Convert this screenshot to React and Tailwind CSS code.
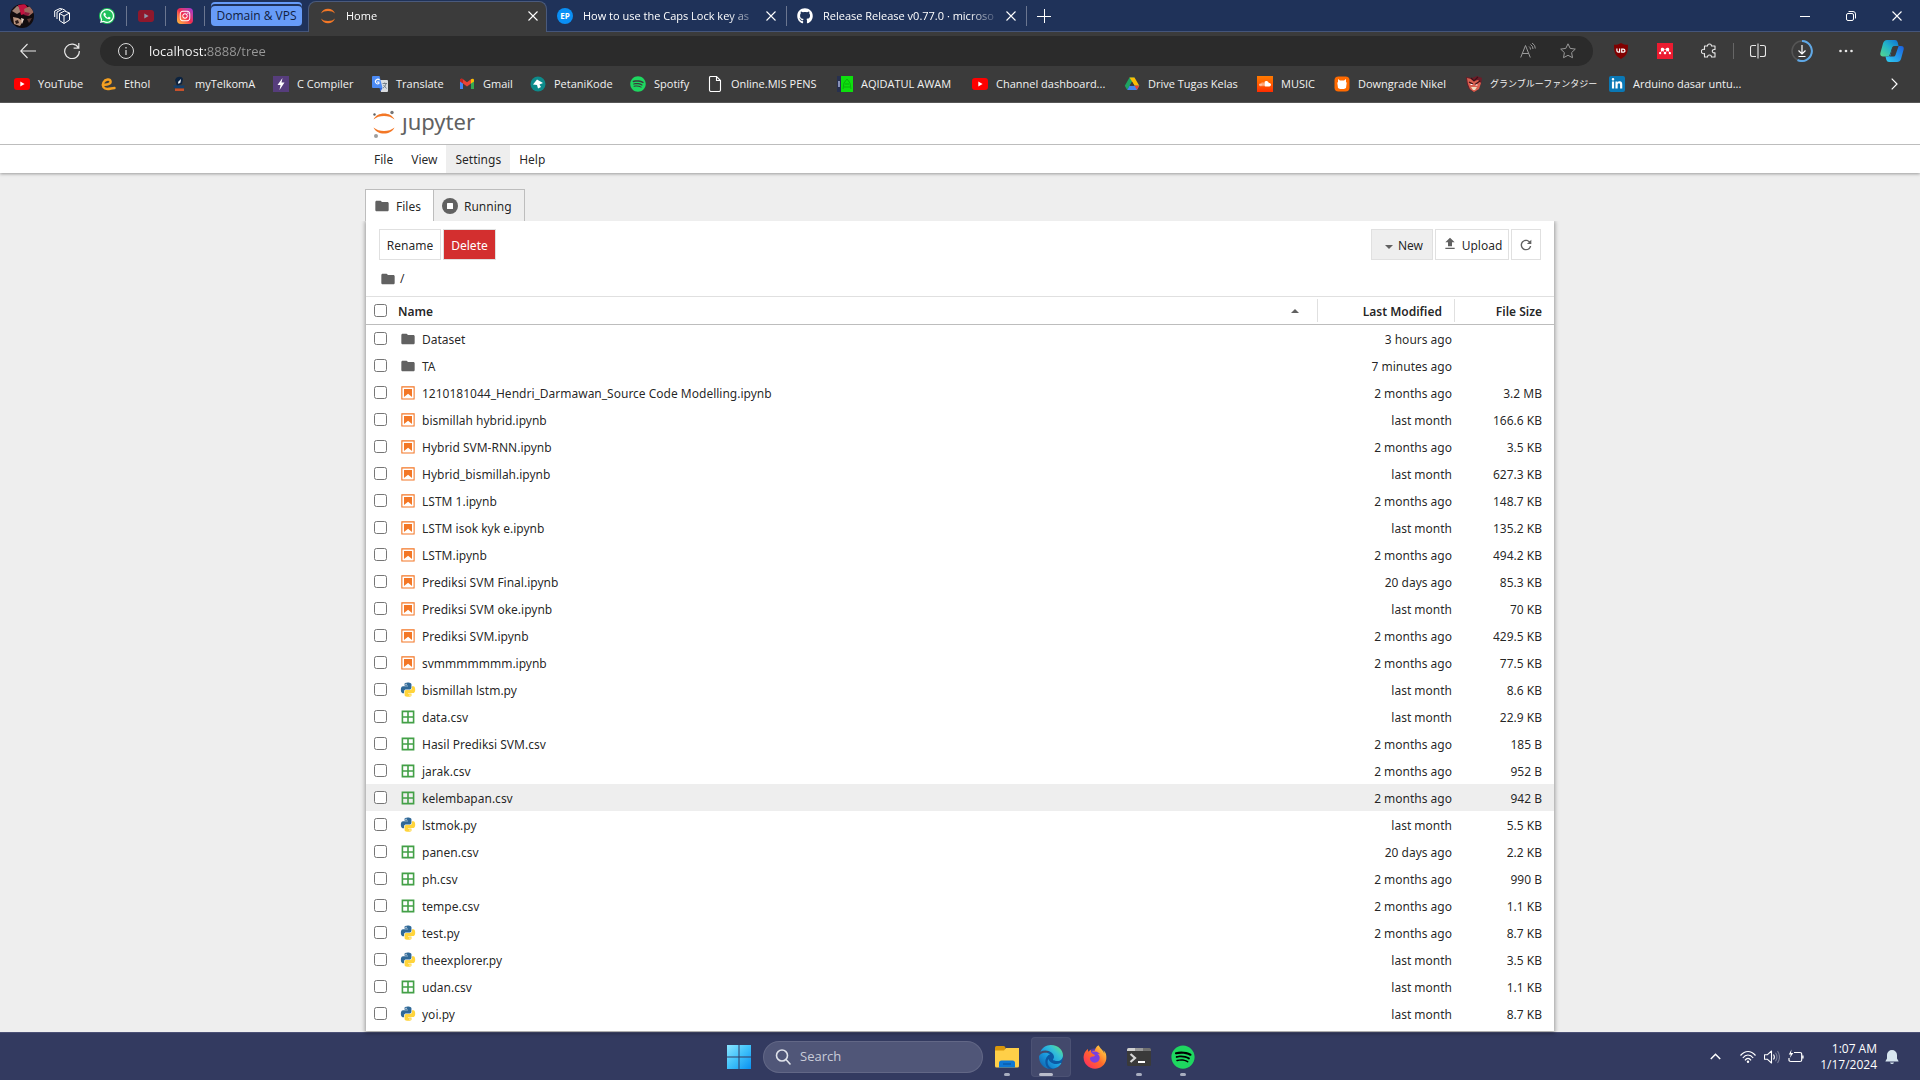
import React from 'react';
import { FaEdge, FaFirefoxBrowser, FaGithub, FaInstagram, FaLinkedinIn, FaSoundcloud, FaSpotify, FaWhatsapp } from 'react-icons/fa6';
import { SiMendeley } from 'react-icons/si';
import { clsx } from 'clsx';

const files = [
    { type: 'folder', name: 'Dataset', modified: '3 hours ago', size: '' },
    { type: 'folder', name: 'TA', modified: '7 minutes ago', size: '' },
    { type: 'notebook', name: '1210181044_Hendri_Darmawan_Source Code Modelling.ipynb', modified: '2 months ago', size: '3.2 MB' },
    { type: 'notebook', name: 'bismillah hybrid.ipynb', modified: 'last month', size: '166.6 KB' },
    { type: 'notebook', name: 'Hybrid SVM-RNN.ipynb', modified: '2 months ago', size: '3.5 KB' },
    { type: 'notebook', name: 'Hybrid_bismillah.ipynb', modified: 'last month', size: '627.3 KB' },
    { type: 'notebook', name: 'LSTM 1.ipynb', modified: '2 months ago', size: '148.7 KB' },
    { type: 'notebook', name: 'LSTM isok kyk e.ipynb', modified: 'last month', size: '135.2 KB' },
    { type: 'notebook', name: 'LSTM.ipynb', modified: '2 months ago', size: '494.2 KB' },
    { type: 'notebook', name: 'Prediksi SVM Final.ipynb', modified: '20 days ago', size: '85.3 KB' },
    { type: 'notebook', name: 'Prediksi SVM oke.ipynb', modified: 'last month', size: '70 KB' },
    { type: 'notebook', name: 'Prediksi SVM.ipynb', modified: '2 months ago', size: '429.5 KB' },
    { type: 'notebook', name: 'svmmmmmmm.ipynb', modified: '2 months ago', size: '77.5 KB' },
    { type: 'python', name: 'bismillah lstm.py', modified: 'last month', size: '8.6 KB' },
    { type: 'csv', name: 'data.csv', modified: 'last month', size: '22.9 KB' },
    { type: 'csv', name: 'Hasil Prediksi SVM.csv', modified: '2 months ago', size: '185 B' },
    { type: 'csv', name: 'jarak.csv', modified: '2 months ago', size: '952 B' },
    { type: 'csv', name: 'kelembapan.csv', modified: '2 months ago', size: '942 B', active: true },
    { type: 'python', name: 'lstmok.py', modified: 'last month', size: '5.5 KB' },
    { type: 'csv', name: 'panen.csv', modified: '20 days ago', size: '2.2 KB' },
    { type: 'csv', name: 'ph.csv', modified: '2 months ago', size: '990 B' },
    { type: 'csv', name: 'tempe.csv', modified: '2 months ago', size: '1.1 KB' },
    { type: 'python', name: 'test.py', modified: '2 months ago', size: '8.7 KB' },
    { type: 'python', name: 'theexplorer.py', modified: 'last month', size: '3.5 KB' },
    { type: 'csv', name: 'udan.csv', modified: 'last month', size: '1.1 KB' },
    { type: 'python', name: 'yoi.py', modified: 'last month', size: '8.7 KB' },
];

const FolderIcon = () => (
    <svg className="size-4 shrink-0" viewBox="0 0 24 24" fill="#616161">
        <path d="M10 4H4c-1.1 0-1.99.9-1.99 2L2 18c0 1.1.9 2 2 2h16c1.1 0 2-.9 2-2V8c0-1.1-.9-2-2-2h-8l-2-2z" />
    </svg>
);

const NotebookIcon = () => (
    <svg className="size-4 shrink-0" viewBox="0 0 22 22" fill="#f37726">
        <path d="M18.7 3.3v15.4H3.3V3.3h15.4m1.5-1.5H1.8v18.3h18.3l.1-18.3z" />
        <path d="M16.5 16.5l-5.4-4.3-5.6 4.3v-11h11z" />
    </svg>
);

const CsvIcon = () => (
    <svg className="size-4 shrink-0" viewBox="0 0 22 22" fill="#43a047">
        <path d="M2.2 2.2v17.6h17.6V2.2H2.2zm15.4 7.7h-5.5V4.4h5.5v5.5zM9.9 4.4v5.5H4.4V4.4h5.5zm-5.5 7.7h5.5v5.5H4.4v-5.5zm7.7 5.5v-5.5h5.5v5.5h-5.5z" />
    </svg>
);

const PythonIcon = () => (
    <svg className="size-4 shrink-0" viewBox="-1.5 -1 27 27">
        <path
            fill="#306998"
            d="M14.25.18l.9.2.73.26.59.3.45.32.34.34.25.34.16.33.1.3.04.26.02.2-.01.13V8.5l-.05.63-.13.55-.21.46-.26.38-.3.31-.33.25-.35.19-.35.14-.33.1-.3.07-.26.04-.21.02H8.77l-.69.05-.59.14-.5.22-.41.27-.33.32-.27.35-.2.36-.15.37-.1.35-.07.32-.04.27-.02.21v3.06H3.17l-.21-.03-.28-.07-.32-.12-.35-.18-.36-.26-.36-.36-.35-.46-.32-.59-.28-.73-.21-.88-.14-1.05-.05-1.23.06-1.22.16-1.04.24-.87.32-.71.36-.57.4-.44.42-.33.42-.24.4-.16.36-.1.32-.05.24-.01h.16l.06.01h8.16v-.83H6.18l-.01-2.75-.02-.37.05-.34.11-.31.17-.28.25-.26.31-.23.38-.2.44-.18.51-.15.58-.12.64-.1.71-.06.77-.04.84-.02 1.27.05zm-6.3 1.98l-.23.33-.08.41.08.41.23.34.33.22.41.09.41-.09.33-.22.23-.34.08-.41-.08-.41-.23-.33-.33-.22-.41-.09-.41.09z"
        />
        <path
            fill="#ffd43b"
            d="M21.1 6.11l.28.06.32.12.35.18.36.27.36.35.35.47.32.59.28.73.21.88.14 1.04.05 1.23-.06 1.23-.16 1.04-.24.86-.32.71-.36.57-.4.45-.42.33-.42.24-.4.16-.36.09-.32.05-.24.02-.16-.01h-8.22v.82h5.84l.01 2.76.02.36-.05.34-.11.31-.17.29-.25.25-.31.24-.38.2-.44.17-.51.15-.58.13-.64.09-.71.07-.77.04-.84.01-1.27-.04-1.07-.14-.9-.2-.73-.25-.59-.3-.45-.33-.34-.34-.25-.34-.16-.33-.1-.3-.04-.25-.02-.2.01-.13v-5.34l.05-.64.13-.54.21-.46.26-.38.3-.32.33-.24.35-.2.35-.14.33-.1.3-.06.26-.04.21-.02.13-.01h5.84l.69-.05.59-.14.5-.21.41-.28.33-.32.27-.35.2-.36.15-.36.1-.35.07-.32.04-.28.02-.21V6.07h2.09l.14.01zm-6.47 14.25l-.23.33-.08.41.08.41.23.33.33.23.41.08.41-.08.33-.23.23-.33.08-.41-.08-.41-.23-.33-.33-.23-.41-.08-.41.08z"
        />
    </svg>
);

const fileIcons = { folder: FolderIcon, notebook: NotebookIcon, csv: CsvIcon, python: PythonIcon };

const YoutubeIcon = () => (
    <svg className="size-4 shrink-0" viewBox="0 0 16 16">
        <rect x="0" y="2" width="16" height="12" rx="3" fill="#f00" />
        <path d="M6.3 5.5v5l4.3-2.5z" fill="#fff" />
    </svg>
);

const SpotifyIcon = () => <FaSpotify className="size-4 shrink-0 text-[#1ed760]" />;

const EtholIcon = () => (
    <svg className="size-4 shrink-0" viewBox="0 0 16 16" fill="none" stroke="#f5a021" strokeWidth="2.4" strokeLinecap="round">
        <path d="M3 8.6c4 .6 8-.6 7.600-3.200C10.200 2.600 5.400 2.800 3.400 6.500 1.600 10 3.800 13 7.500 13c2.500 0 4.500-1 7-1" />
    </svg>
);

const TelkomIcon = () => (
    <svg className="size-4 shrink-0" viewBox="0 0 16 16">
        <path d="M4 4c1-4 7-4.500 8-1l-1 5-5 2z" fill="#0c2340" />
        <path d="M7 6l3-3-.5 3.500L7.500 8z" fill="#e8eef5" />
        <path d="M2 9.500h12l-1.500 2.500h-9z" fill="#14406e" />
        <path d="M4 12.500h9V15H4z" fill="#c8512b" />
    </svg>
);

const CompilerIcon = () => (
    <svg className="size-4 shrink-0" viewBox="0 0 16 16">
        <path d="M0 0h16v16H0z" fill="#563d7c" />
        <path d="M9.500 2L4.500 9h3L6.500 14l5-7.500h-3z" fill="#fff" />
    </svg>
);

const TranslateIcon = () => (
    <svg className="size-4 shrink-0" viewBox="0 0 16 16">
        <path d="M7 4h8a1 1 0 011 1v10a1 1 0 01-1 1H9z" fill="#dadce0" />
        <path d="M1 0h6.500l3 12H1a1 1 0 01-1-1V1a1 1 0 011-1z" fill="#4c8bf5" />
        <path d="M7.600 4.200A2.300 2.300 0 106.900 7.600 V6H5" fill="none" stroke="#fff" strokeWidth="1.1" />
        <path d="M10.500 7.500h4.500M12.700 6.500v1M14 7.500c-.5 2.500-1.500 3.500-3 4.500M11.500 9l3 3.500" fill="none" stroke="#6b7785" strokeWidth=".9" />
        <path d="M7.500 12h3l-2 3.500z" fill="#3367d6" />
    </svg>
);

const GmailIcon = () => (
    <svg className="size-4 shrink-0" viewBox="0 0 16 16">
        <path d="M1 4v9h3V6z" fill="#4285f4" />
        <path d="M12 6v7h3V4z" fill="#34a853" />
        <path d="M1 4.500C1 2.500 3 2.500 4 3.200l4 3 4-3v4.200l-4 3-4-3z" fill="#ea4335" />
        <path d="M1 4.300c0-1.800 2-1.800 3-1v4.200L1 5.500z" fill="#c5221f" />
        <path d="M15 4.300c0-1.800-2-1.800-3-1v4.200l3-2z" fill="#fbbc04" />
    </svg>
);

const PetaniIcon = () => (
    <svg className="size-4 shrink-0" viewBox="0 0 16 16">
        <circle cx="8" cy="8" r="7.500" fill="#0d8a8a" />
        <path d="M3 8.500L7 3.500l6 3.500-3.500 1.500L11 11 8 12.500 7 9z" fill="#fff" />
    </svg>
);

const PageIcon = () => (
    <svg className="size-4 shrink-0" viewBox="0 0 16 16" fill="none" stroke="#fff" strokeWidth="1.1">
        <path d="M3.500.5h6l4 4v9.500q0 1.500-1.500 1.500H4q-1.500 0-1.500-1.500V1.500q0-1 1-1zM9.500.5v4h4" />
    </svg>
);

const AqidatulIcon = () => (
    <svg className="size-4 shrink-0" viewBox="0 0 16 16">
        <path d="M0 0h16v16H0z" fill="#0de00d" />
        <path d="M0 0h4v16H0z" fill="#27304f" />
        <path d="M1 5h2v6H1z" fill="#8891b8" />
        <path d="M6 13l1-6 3-4 3 4 1 6M8 8h4M7 11h6" fill="none" stroke="#0bb00b" />
    </svg>
);

const DriveIcon = () => (
    <svg className="size-4 shrink-0" viewBox="0 0 16 16">
        <path d="M5.500 1.500h5L5.300 10.500 3.200 14 .8 9.800z" fill="#1ea362" />
        <path d="M5.500 1.500h5l4.800 8.300h-4.700L8 5.500z" fill="#fbbc04" />
        <path d="M3.200 14l2.400-4.200h9.700L12.900 14z" fill="#4285f4" />
        <path d="M10.600 9.800h4.700L12.900 14z" fill="#ea4335" />
        <path d="M8 5.800l2.300 4H5.700z" fill="#3b3b3b" />
    </svg>
);

const SoundcloudIcon = () => (
    <span className="flex size-4 shrink-0 items-center justify-center bg-linear-to-b from-[#ff7a00] to-[#ff2a00] text-white">
        <FaSoundcloud className="size-3" />
    </span>
);

const DowngradeIcon = () => (
    <svg className="size-4 shrink-0" viewBox="0 0 16 16">
        <rect x=".5" y=".5" width="15" height="15" rx="4" fill="#ff6a00" />
        <path d="M4 3l2 1.500h4L12 3v3l.7.700-.7 5.300-2 1H6l-2-1-.700-5.300L4 6z" fill="#fff" />
    </svg>
);

const GranblueIcon = () => (
    <svg className="size-4 shrink-0" viewBox="0 0 16 16">
        <path d="M0 1l6 1 5-2 5 2-1 6-3 5-4 3-5-3-2-5z" fill="#6e1c28" />
        <path d="M1 2l4 1 3 2 4-1 3 3-2 6-5 3-4-3-2-5z" fill="#d9604f" />
        <path d="M3 6l4 2M14 5L9 8.500M5 2l3 3 4-4" stroke="#3a1218" strokeWidth="1.200" fill="none" />
        <path d="M5 11h6l-2 3H7z" fill="#f0dcc0" />
        <path d="M4.500 8.500h2M9.500 9h2" stroke="#fff" />
    </svg>
);

const LinkedinIcon = () => (
    <span className="flex size-4 shrink-0 items-center justify-center rounded-[2px] bg-[#0a78b5] text-white">
        <FaLinkedinIn className="size-3" />
    </span>
);

const bookmarks = [
    { label: 'YouTube', Icon: YoutubeIcon, width: 'w-[86px]' },
    { label: 'Ethol', Icon: EtholIcon, width: 'w-[71px]' },
    { label: 'myTelkomA', Icon: TelkomIcon, width: 'w-[102px]' },
    { label: 'C Compiler', Icon: CompilerIcon, width: 'w-[99px]' },
    { label: 'Translate', Icon: TranslateIcon, width: 'w-[87px]' },
    { label: 'Gmail', Icon: GmailIcon, width: 'w-[71px]' },
    { label: 'PetaniKode', Icon: PetaniIcon, width: 'w-[100px]' },
    { label: 'Spotify', Icon: SpotifyIcon, width: 'w-[77px]' },
    { label: 'Online.MIS PENS', Icon: PageIcon, width: 'w-[130px]' },
    { label: 'AQIDATUL AWAM', Icon: AqidatulIcon, width: 'w-[135px]' },
    { label: 'Channel dashboard...', Icon: YoutubeIcon, width: 'w-[152px]' },
    { label: 'Drive Tugas Kelas', Icon: DriveIcon, width: 'w-[133px]' },
    { label: 'MUSIC', Icon: SoundcloudIcon, width: 'w-[77px]' },
    { label: 'Downgrade Nikel', Icon: DowngradeIcon, width: 'w-[132px]' },
    { label: 'グランブルーファンタジー', Icon: GranblueIcon, width: 'w-[143px] text-[9px]' },
    { label: 'Arduino dasar untu...', Icon: LinkedinIcon, width: 'w-[140px]' },
];

const CloseGlyph = () => (
    <svg className="size-[10px]" viewBox="0 0 10 10" stroke="currentColor" strokeWidth="1.1">
        <path d="M.5.5l9 9M9.500.5l-9 9" />
    </svg>
);

const Divider = () => <span className="h-5 w-px shrink-0 bg-[#6b7690]" />;

const BrowserTab = ({ icon, title, active }) => (
    <div
        className={clsx(
            'flex w-[239px] shrink-0 items-center pl-[10px] text-[11px] text-white',
            active ? 'mt-px h-[31px] rounded-t-lg border border-b-0 border-[#4a5a7c] bg-[#3b3b3b] pr-2 pb-[2px]' : 'h-[26px] pr-[10px]',
        )}
    >
        {icon}
        <span className="ml-[10px] w-[174px] overflow-hidden whitespace-nowrap [mask-image:linear-gradient(90deg,#000_145px,transparent_178px)]">{title}</span>
        <button type="button" aria-label="Close tab" className="ml-auto">
            <CloseGlyph />
        </button>
    </div>
);

const TabStrip = () => (
    <div className="flex h-8 items-end bg-[#1f3259] shadow-[inset_0_-1px_0_#44557a]">
        <div className="flex h-8 items-center">
            <button type="button" aria-label="Profile" className="ml-[10px]">
                <svg className="size-6 rounded-full" viewBox="0 0 24 24">
                    <path d="M0 0h24v24H0z" fill="#120c0e" />
                    <path d="M2 7l5-5 4 1 1 4-5 3z" fill="#a08274" />
                    <path d="M8 1l7-1 3 4-3 6-4 1-1-4z" fill="#c3123f" />
                    <path d="M14 5l6-3 4 6-5 4-4-2z" fill="#9c6a5e" />
                    <path d="M15 8l5 1-2 3-4-1z" fill="#8e1a3c" />
                    <path d="M3 13l5 1 5 3-3 5-6-2z" fill="#b8927c" />
                    <path d="M5 17l3-1 1 3-3 1z" fill="#2a1a18" />
                    <path d="M11 14l3 1-2 5z" fill="#e6d2c4" />
                    <path d="M17 15l5-1-3 5z" fill="#5a3a34" />
                </svg>
            </button>
            <button type="button" aria-label="Workspaces" className="ml-5">
                <svg className="size-4" viewBox="0 0 16 16" fill="none" stroke="#fff" strokeWidth="1" strokeLinejoin="round">
                    <path d="M5.500 5.500L10 8v7.500l-4.500-3zM10 8l5.500-3v7L10 15.500M5.500 5.500L10.500 3l5 2M3 11V4l5.500-3 3 1.500M.7 9V3L6 .5l2 .5" />
                </svg>
            </button>
            <button type="button" aria-label="WhatsApp" className="mr-[11px] ml-[29px] flex size-4 items-center justify-center rounded-full bg-[#1fc15b] text-white">
                <FaWhatsapp className="size-4" />
            </button>
            <Divider />
            <button type="button" aria-label="YouTube" className="mx-[11px] opacity-50">
                <YoutubeIcon />
            </button>
            <Divider />
            <button type="button" aria-label="Instagram" className="mx-[11px] flex size-4 items-center justify-center rounded-sm bg-linear-to-tr from-[#fdc134] via-[#f0264f] to-[#a02bd8] text-white">
                <FaInstagram className="size-3" />
            </button>
            <Divider />
            <button type="button" className="mr-1.5 ml-1.5 h-5 w-[91px] rounded bg-[#679cf8] text-xs whitespace-nowrap text-[#10203f] shadow-[0_-2px_0_0_#1f3259,0_-4px_0_0_#679cf8]">
                Domain &amp; VPS
            </button>
        </div>
        <BrowserTab
            active
            title="Home"
            icon={
                <svg className="ml-px size-4" viewBox="0 0 16 16" fill="#f37726">
                    <path d="M1 5.500C2 2.500 4.700.8 8 .8s6 1.700 7 4.700C13.500 3.800 11 3 8 3s-5.500.8-7 2.500zM1 10.500c1 3 3.700 4.700 7 4.700s6-1.700 7-4.700C13.500 12.200 11 13 8 13s-5.500-.8-7-2.500z" />
                </svg>
            }
        />
        <div className="flex h-8 items-center">
            <BrowserTab
                title="How to use the Caps Lock key as"
                icon={<span className="flex size-4 items-center justify-center rounded-full bg-[#0a8ff5] text-[8px] font-bold text-white">EP</span>}
            />
            <Divider />
            <BrowserTab title="Release Release v0.77.0 · microso" icon={<FaGithub className="size-4 text-white" />} />
            <Divider />
            <button type="button" aria-label="New tab" className="ml-[10px]">
                <svg className="size-[14px]" viewBox="0 0 14 14" stroke="#fff" strokeWidth="1">
                    <path d="M0 7.500h14M7.500 0v14" />
                </svg>
            </button>
        </div>
        <div className="ml-auto flex h-8 text-white">
            <button type="button" aria-label="Minimize" className="flex w-[46px] items-center justify-center">
                <span className="h-px w-[10px] bg-white" />
            </button>
            <button type="button" aria-label="Restore" className="flex w-[46px] items-center justify-center">
                <svg className="size-[10px]" viewBox="0 0 10 10" fill="none" stroke="currentColor">
                    <rect x=".5" y="2.500" width="7" height="7" rx="1.500" />
                    <path d="M2.500.5h4.500q2.500 0 2.500 2.500v4.500" />
                </svg>
            </button>
            <button type="button" aria-label="Close" className="flex w-[46px] items-center justify-center">
                <CloseGlyph />
            </button>
        </div>
    </div>
);

const ToolButton = ({ label, children }) => (
    <button type="button" aria-label={label} className="flex h-8 w-11 shrink-0 items-center justify-center text-[#e8e8e8]">
        {children}
    </button>
);

const Toolbar = () => (
    <div className="flex h-[38px] items-center pr-1.5 pl-1.5">
        <ToolButton label="Back">
            <svg className="size-4" viewBox="0 0 16 16" fill="none" stroke="currentColor" strokeWidth="1.100">
                <path d="M16 8H.800M7.500 1L.700 8l6.800 7" />
            </svg>
        </ToolButton>
        <ToolButton label="Refresh">
            <svg className="size-4" viewBox="0 0 16 16" fill="none" stroke="currentColor" strokeWidth="1.200">
                <path d="M14.500 5A7.300 7.300 0 1015.300 8M14.800 0v5.200H9.600" />
            </svg>
        </ToolButton>
        <div className="mx-1.5 flex h-[30px] flex-1 items-center rounded-full bg-[#2b2b2b] pr-[17px] pl-[18px]">
            <svg className="size-4 shrink-0" viewBox="0 0 16 16" fill="none" stroke="#ddd">
                <circle cx="8" cy="8" r="7.500" />
                <path d="M8 7v5M8 4v1.500" strokeWidth="1.200" />
            </svg>
            <input
                type="text"
                aria-label="Address"
                defaultValue="localhost:8888/tree"
                className="ml-[15px] min-w-0 flex-1 bg-[linear-gradient(90deg,#fff_57px,#999_57px)] bg-clip-text pt-[2px] text-[13px] text-transparent outline-none"
            />
            <svg className="mr-6 size-4 shrink-0" viewBox="0 0 16 16" fill="none" stroke="#9a9a9a">
                <path d="M.7 14.500L5.500 2.500l4.800 12M2.200 10.500h6.600M9 3.500q1.500 1 1.500 3M10.500 1.500q2.500 1.500 2.500 4.500M12 0q3.500 2 3.300 5.500" />
            </svg>
            <svg className="size-4 shrink-0" viewBox="0 0 16 16" fill="none" stroke="#9a9a9a" strokeLinejoin="round">
                <path d="M8 .8l2.200 4.600 5.100.7-3.700 3.500.9 5.100L8 12.300l-4.500 2.400.9-5.100L.7 6.100l5.100-.7z" />
            </svg>
        </div>
        <ToolButton label="uBlock Origin">
            <svg className="size-4" viewBox="0 0 16 16">
                <path d="M8 0c2 1.300 4 1.800 7 1.800 0 6.500-.5 10.700-7 14.200C1.500 12.500 1 8.300 1 1.800 4 1.800 6 1.300 8 0z" fill="#800000" />
                <path d="M3.900 5.500v2.300q0 1.300 1.700 1.300h1V5.500M8.700 9.100V6.200h1.600q1.600 0 1.600 1.500t-1.600 1.400z" fill="none" stroke="#fff" strokeWidth="1.200" />
            </svg>
        </ToolButton>
        <ToolButton label="Mendeley">
            <span className="flex size-4 items-center justify-center bg-[#ec1b30] text-white">
                <SiMendeley className="size-3" />
            </span>
        </ToolButton>
        <ToolButton label="Extensions">
            <svg className="size-4" viewBox="0 0 16 16" fill="none" stroke="currentColor" strokeWidth="1.100" strokeLinejoin="round">
                <path d="M3.500 3h3a2 2 0 114 0h3.500v3.500h-1a1.700 1.700 0 100 3.400h1V14h-3.500a2 2 0 10-4 0h-3v-3.500a2.200 2.200 0 110-4z" />
            </svg>
        </ToolButton>
        <span className="mx-[2px] h-4 w-px bg-[#666]" />
        <ToolButton label="Split screen">
            <svg className="size-4" viewBox="0 0 16 16" fill="none" stroke="currentColor" strokeWidth="1.100">
                <path d="M6 2.500H2.500q-2 0-2 2v7q0 2 2 2H6M8 .5v15M10 2.500h3.500q2 0 2 2v7q0 2-2 2H10" />
            </svg>
        </ToolButton>
        <ToolButton label="Downloads">
            <svg className="size-[22px]" viewBox="0 0 22 22" fill="none">
                <circle cx="11" cy="11" r="10" stroke="#555" strokeWidth="1.500" />
                <path d="M11 1a10 10 0 11-4.500 19" stroke="#5fa8e6" strokeWidth="2" />
                <path d="M11 5v8.500M7.500 10.500L11 14l3.500-3.500M7.500 16.500h7" stroke="#fff" strokeWidth="1.200" />
            </svg>
        </ToolButton>
        <ToolButton label="Settings and more">
            <svg className="size-4" viewBox="0 0 16 16" fill="currentColor">
                <circle cx="2.500" cy="8" r="1.300" />
                <circle cx="8" cy="8" r="1.300" />
                <circle cx="13.500" cy="8" r="1.300" />
            </svg>
        </ToolButton>
        <span className="w-[2px]" />
        <ToolButton label="Copilot">
            <svg className="size-6" viewBox="0 0 24 24">
                <defs>
                    <linearGradient id="copilotLeft" x1="0" y1="1" x2="1" y2="0">
                        <stop offset="0" stopColor="#57d98a" />
                        <stop offset=".5" stopColor="#23b5c9" />
                        <stop offset="1" stopColor="#0f6fd6" />
                    </linearGradient>
                    <linearGradient id="copilotRight" x1="0" y1="1" x2="1" y2="0">
                        <stop offset="0" stopColor="#2fd0f0" />
                        <stop offset="1" stopColor="#1a5fe0" />
                    </linearGradient>
                </defs>
                <path d="M7 1h8q2 0 2.600 2l1 4h-4q-2 0-2.600 2l-2 6q-.8 2.500-3 2.500H3q-3.500 0-2.500-4l2.500-9q1-3.500 4-3.500z" fill="url(#copilotLeft)" />
                <path d="M17 7h4q3.500 0 2.500 4l-2.500 9q-1 3-4 3H9q-2 0-2.600-2l-.9-3.500h2q2.500 0 3.200-2.500l2-6q.8-2 4.300-2z" fill="url(#copilotRight)" />
                <path d="M12 9.500q.6-2.500 2.600-2.500h4L15.500 16q-.5 1.500-2 1.500h-4.300q1.200-.5 1.600-2z" fill="#3b3b3b" />
            </svg>
        </ToolButton>
    </div>
);

const BookmarkBar = () => (
    <nav aria-label="Favorites" className="flex h-8 items-start pr-[22px] pl-[14px] text-[11px] text-[#f2f2f2]">
        {bookmarks.map(({ label, Icon, width }) => (
            <a key={label} href="#" className={clsx('flex h-7 shrink-0 items-center gap-2 whitespace-nowrap', width)}>
                <Icon />
                {label}
            </a>
        ))}
        <button type="button" aria-label="More favorites" className="ml-auto flex h-7 items-center">
            <svg className="h-3 w-[7px]" viewBox="0 0 7 12" fill="none" stroke="#fff" strokeWidth="1.200">
                <path d="M.7.7L6 6 .7 11.300" />
            </svg>
        </button>
    </nav>
);

const menu = ['File', 'View', 'Settings', 'Help'];

const NotebookHeader = () => (
    <header className="relative shrink-0 bg-white font-['Noto_Sans','Open_Sans',sans-serif] shadow-[0_1px_3px_rgba(0,0,0,0.35)]">
        <div className="border-b border-[#bdbdbd]">
            <div className="mx-auto flex h-[41px] w-full max-w-[1188px] items-center pl-[6px]">
                <svg className="h-7 w-6 shrink-0" viewBox="0 0 24 28">
                    <path d="M1.500 9.500C3.500 5.500 7.500 3.500 12 3.500s8.500 2 10.500 6C19.500 7 16 6 12 6S4.500 7 1.500 9.500zM1.500 17.500c2 4 6 6 10.500 6s8.500-2 10.500-6C19.500 20 16 21 12 21S4.500 20 1.500 17.500z" fill="#f37726" />
                    <circle cx="20" cy="2.500" r="1.700" fill="#767677" />
                    <circle cx="2.500" cy="4.500" r="1.200" fill="#616262" />
                    <circle cx="4" cy="26" r="2" fill="#9e9e9e" />
                </svg>
                <span aria-label="jupyter" className="ml-1.5 pb-1.5 text-[22px] leading-7 text-[#616161]">
                    ȷupyter
                </span>
            </div>
        </div>
        <div className="mx-auto flex h-[28px] w-full max-w-[1190px] text-xs text-black/87">
            {menu.map((item) => (
                <button key={item} type="button" className={clsx('px-[9px] pt-[2px]', item === 'Settings' && 'bg-[#eee]')}>
                    {item}
                </button>
            ))}
        </div>
    </header>
);

const FileRow = ({ file }) => {
    const Icon = fileIcons[file.type];
    return (
        <tr className={clsx('h-[27px]', file.active && 'bg-[#eee]')}>
            <td className="pl-2">
                <input type="checkbox" aria-label={file.name} className="block size-[13px]" />
            </td>
            <td>
                <span className="flex items-center gap-1.5 pl-[2px] whitespace-nowrap">
                    <Icon />
                    <span className="pt-[2px]">{file.name}</span>
                </span>
            </td>
            <td className="pt-[2px] pr-[3px] text-right">{file.modified}</td>
            <td className="pt-[2px] pr-3 text-right">{file.size}</td>
        </tr>
    );
};

const FileBrowser = () => (
    <main className="mx-auto flex min-h-0 w-full max-w-[1188px] flex-1 flex-col pt-4 font-['Noto_Sans','Open_Sans',sans-serif] text-xs text-black/87">
        <div className="-ml-px flex shrink-0">
            <button type="button" className="flex h-8 items-center gap-1.5 border border-b-0 border-[#bdbdbd] bg-white pr-3 pl-2">
                <FolderIcon />
                <span className="pt-[2px]">Files</span>
            </button>
            <button type="button" className="flex h-8 items-center gap-1.5 border border-b-0 border-l-0 border-[#bdbdbd] bg-[#eee] pr-3 pl-2">
                <svg className="size-4" viewBox="0 0 16 16">
                    <circle cx="8" cy="8" r="8" fill="#616161" />
                    <rect x="5" y="5" width="6" height="6" rx=".5" fill="#fff" />
                </svg>
                <span className="pt-[2px]">Running</span>
            </button>
        </div>
        <section className="mb-px min-h-0 flex-1 bg-white shadow-[0_1px_4px_1px_rgba(0,0,0,0.35)] [clip-path:inset(0_-8px_-8px_-8px)]">
            <div className="flex gap-[2px] px-[13px] pt-2">
                <button type="button" className="h-[31px] w-[62px] border border-[#e0e0e0] pt-[2px]">
                    Rename
                </button>
                <button type="button" className="h-[31px] w-[53px] border border-[#e0e0e0] bg-[#d32f2f] pt-[2px] text-white">
                    Delete
                </button>
                <button type="button" className="ml-auto flex h-[31px] w-[62px] items-center justify-center gap-[5px] border border-[#e0e0e0] bg-[#eee] pl-1">
                    <svg className="mt-1 h-1 w-2" viewBox="0 0 8 4" fill="#616161">
                        <path d="M0 0h8L4 4z" />
                    </svg>
                    <span className="pt-[2px]">New</span>
                </button>
                <button type="button" className="flex h-[31px] w-[74px] items-center justify-center gap-1 border border-[#e0e0e0]">
                    <svg className="size-4 shrink-0" viewBox="0 0 24 24" fill="#616161">
                        <path d="M9 14h6V8h4l-7-7-7 7h4zm-4 2h14v2H5z" />
                    </svg>
                    <span className="pt-[2px]">Upload</span>
                </button>
                <button type="button" aria-label="Refresh" className="flex h-[31px] w-[30px] items-center justify-center border border-[#e0e0e0]">
                    <svg className="size-4" viewBox="0 0 18 18" fill="#616161">
                        <path d="M9 13.500c-2.490 0-4.500-2.010-4.500-4.500S6.510 4.500 9 4.500c1.240 0 2.360.52 3.170 1.330L10 8h5V3l-1.760 1.760C12.150 3.680 10.660 3 9 3 5.690 3 3.010 5.690 3.010 9S5.690 15 9 15c2.970 0 5.430-2.160 5.900-5h-1.520c-.46 2-2.240 3.500-4.380 3.500z" />
                    </svg>
                </button>
            </div>
            <div className="flex h-9 items-center gap-1 pt-[2px] pl-[14px]">
                <FolderIcon />/
            </div>
            <table className="w-full table-fixed border-separate border-spacing-0">
                <colgroup>
                    <col className="w-8" />
                    <col />
                    <col className="w-[137px]" />
                    <col className="w-[99px]" />
                </colgroup>
                <thead>
                    <tr className="h-[29px] [&>th]:border-t [&>th]:border-b [&>th]:border-t-[#e0e0e0] [&>th]:border-b-[#bdbdbd] [&>th]:font-semibold">
                        <th className="pl-2">
                            <input type="checkbox" aria-label="Select all files" className="block size-[13px]" />
                        </th>
                        <th>
                            <span className="flex h-[23px] items-center justify-between border-r border-[#e0e0e0] pr-[18px]">
                                <span className="pt-[2px]">Name</span>
                                <svg className="h-1 w-2" viewBox="0 0 8 4" fill="#616161">
                                    <path d="M0 4l4-4 4 4z" />
                                </svg>
                            </span>
                        </th>
                        <th>
                            <span className="flex h-[23px] items-center justify-end border-r border-[#e0e0e0] pt-[2px] pr-3">Last Modified</span>
                        </th>
                        <th className="pt-[2px] pr-3 text-right">File Size</th>
                    </tr>
                </thead>
                <tbody>
                    {files.map((file) => (
                        <FileRow key={file.name} file={file} />
                    ))}
                </tbody>
            </table>
        </section>
    </main>
);

const TaskbarApp = ({ label, active, running, children }) => (
    <button
        type="button"
        aria-label={label}
        className={clsx(
            'relative mx-[2px] flex size-10 items-center justify-center rounded',
            active && 'border border-white/5 bg-white/8',
        )}
    >
        {children}
        {running && <span className="absolute bottom-px h-[3px] w-1.5 rounded-full bg-[#a9aec0]" />}
        {active && <span className="absolute bottom-0 left-[7px] h-[3px] w-[14px] rounded-full bg-[#b9bccb]" />}
    </button>
);

const Taskbar = () => (
    <footer className="grid h-12 shrink-0 grid-cols-[1fr_auto_1fr] items-center border-t border-[#4b5076] bg-[#333a60] pl-[2px] text-white">
        <div />
        <div className="flex items-center">
            <TaskbarApp label="Start">
                <svg className="size-6" viewBox="0 0 24 24">
                    <defs>
                        <linearGradient id="winLogo" gradientUnits="userSpaceOnUse" x1="0" y1="0" x2="24" y2="24">
                            <stop offset="0" stopColor="#8be4ff" />
                            <stop offset=".5" stopColor="#3fc1fa" />
                            <stop offset="1" stopColor="#0a90f0" />
                        </linearGradient>
                    </defs>
                    <path d="M0 0h11.500v11.500H0zM12.500 0H24v11.500H12.500zM0 12.500h11.500V24H0zM12.500 12.500H24V24H12.500z" fill="url(#winLogo)" />
                </svg>
            </TaskbarApp>
            <label className="mx-[2px] flex h-8 w-[220px] items-center rounded-full border border-white/10 bg-[#505678] pl-[11px]">
                <svg className="size-4 shrink-0" viewBox="0 0 16 16" fill="none" stroke="#dfe2ea" strokeWidth="1.600">
                    <circle cx="7" cy="6.500" r="5.500" />
                    <path d="M11 10.500l4 4.500" strokeLinecap="round" />
                </svg>
                <input type="text" aria-label="Search" placeholder="Search" className="ml-[9px] w-40 bg-transparent text-[13px] outline-none placeholder:text-[#c9ccd8]" />
            </label>
            <TaskbarApp label="File Explorer" running>
                <svg className="size-6" viewBox="0 0 24 24">
                    <path d="M0 2.500Q0 1 1.500 1h7q1 0 1.500.7L10.500 3v5H0z" fill="#d9960b" />
                    <path d="M0 5.500h9l2-2.500h13v18q0 1.500-1.500 1.500h-21Q0 22.500 0 21z" fill="#ffcf48" />
                    <path d="M4 22.500V18q0-2.500 2.500-2.500h11q2.500 0 2.500 2.500v4.500z" fill="#0f78d4" />
                    <path d="M8 19h8" stroke="#0a4f94" />
                </svg>
            </TaskbarApp>
            <TaskbarApp label="Microsoft Edge" active>
                <svg className="absolute size-0" aria-hidden="true">
                    <defs>
                        <linearGradient id="edgeFill" x1="0" y1="1" x2="1" y2="0">
                            <stop offset="0" stopColor="#0c59a4" />
                            <stop offset=".45" stopColor="#1b9de2" />
                            <stop offset=".7" stopColor="#35c1d6" />
                            <stop offset="1" stopColor="#66eb6e" />
                        </linearGradient>
                        <linearGradient id="foxFill" x1="0" y1="1" x2="1" y2="0">
                            <stop offset="0" stopColor="#ff1f6b" />
                            <stop offset=".5" stopColor="#ff6a2a" />
                            <stop offset="1" stopColor="#fff04a" />
                        </linearGradient>
                    </defs>
                </svg>
                <span className="flex size-6 items-center justify-center rounded-full bg-[radial-gradient(circle_at_60%_65%,#0c59a4_45%,transparent_50%)]">
                    <FaEdge className="size-6" fill="url(#edgeFill)" />
                </span>
            </TaskbarApp>
            <TaskbarApp label="Firefox">
                <span className="flex size-6 items-center justify-center rounded-full bg-[radial-gradient(circle,#7a3fe0_35%,transparent_55%)]">
                    <FaFirefoxBrowser className="size-6" fill="url(#foxFill)" />
                </span>
            </TaskbarApp>
            <TaskbarApp label="Terminal" running>
                <svg className="size-6" viewBox="0 0 24 24">
                    <rect y="3" width="24" height="18" rx="1.500" fill="#3a3a3a" />
                    <path d="M0 4.500Q0 3 1.500 3H8v3H0z" fill="#d0d0d0" />
                    <path d="M8 3h8v3H8z" fill="#9a9a9a" />
                    <path d="M16 3h6.500Q24 3 24 4.500V6h-8z" fill="#707070" />
                    <path d="M3.500 9l4.500 4-4.500 4" fill="none" stroke="#d8d8d8" strokeWidth="2.200" />
                    <path d="M11 17h7" stroke="#fff" strokeWidth="2" />
                </svg>
            </TaskbarApp>
            <TaskbarApp label="Spotify" running>
                <span className="flex size-6 items-center justify-center rounded-full bg-[radial-gradient(circle,#000_60%,transparent_62%)]">
                    <FaSpotify className="size-6 text-[#1ed760]" />
                </span>
            </TaskbarApp>
        </div>
        <div className="flex items-center justify-end pr-[21px]">
            <button type="button" aria-label="Show hidden icons" className="mr-[19px]">
                <svg className="h-[7px] w-[11px]" viewBox="0 0 11 7" fill="none" stroke="#fff" strokeWidth="1.500">
                    <path d="M.8 6l4.700-4.700L10.200 6" />
                </svg>
            </button>
            <button type="button" aria-label="Network, volume and battery" className="mr-4 flex gap-2">
                <svg className="size-4" viewBox="0 0 16 16" fill="none" stroke="#fff" strokeWidth="1.200">
                    <path d="M.5 6.500Q4 2.500 8 2.500t7.500 4M2.800 9Q5 6 8 6t5.200 3M5 11.300Q6.300 9.300 8 9.300t3 2" />
                    <circle cx="8" cy="12.800" r="1.200" fill="#fff" stroke="none" />
                </svg>
                <svg className="size-4" viewBox="0 0 16 16" fill="none" stroke="#fff" strokeWidth="1.100">
                    <path d="M.5 5.800h2.700L7.500 2v12l-4.300-3.800H.5z" strokeLinejoin="round" />
                    <path d="M9.500 5.500q1.800 2.500 0 5" />
                    <path d="M11.500 3.800q3 4.200 0 8.400M13.500 2q4 6 0 12" opacity=".35" />
                </svg>
                <svg className="size-4" viewBox="0 0 16 16" fill="none" stroke="#fff" strokeWidth="1.200">
                    <path d="M6 3.500h6q1.700 0 1.700 1.500v6q0 1.500-1.700 1.500H3Q1 12.500 1 11V9M15 6.500v3" />
                    <path d="M3.500.5L.8 5.500h2L1.800 9l3.500-5H3z" fill="#fff" stroke="none" />
                </svg>
            </button>
            <div className="text-right text-xs leading-4">
                <div>1:07 AM</div>
                <div>1/17/2024</div>
            </div>
            <button type="button" aria-label="Notifications" className="ml-2">
                <svg className="size-[14px]" viewBox="0 0 14 14" fill="#d7e5ef">
                    <path d="M7 0a5 5 0 015 5v3.500l1.500 2.500v.5H.5V11L2 8.500V5a5 5 0 015-5zM5 12.500h4q-.5 1.500-2 1.500t-2-1.500z" />
                </svg>
            </button>
        </div>
    </footer>
);

const App = () => {
    return (
        <div className="flex h-screen flex-col overflow-hidden bg-[#eee] font-['Open_Sans','Noto_Sans_CJK_JP',sans-serif]">
            <div className="shrink-0 border-b border-[#5c5c5c] bg-[#3b3b3b]">
                <TabStrip />
                <Toolbar />
                <BookmarkBar />
            </div>
            <NotebookHeader />
            <FileBrowser />
            <Taskbar />
        </div>
    );
};

export default App;
